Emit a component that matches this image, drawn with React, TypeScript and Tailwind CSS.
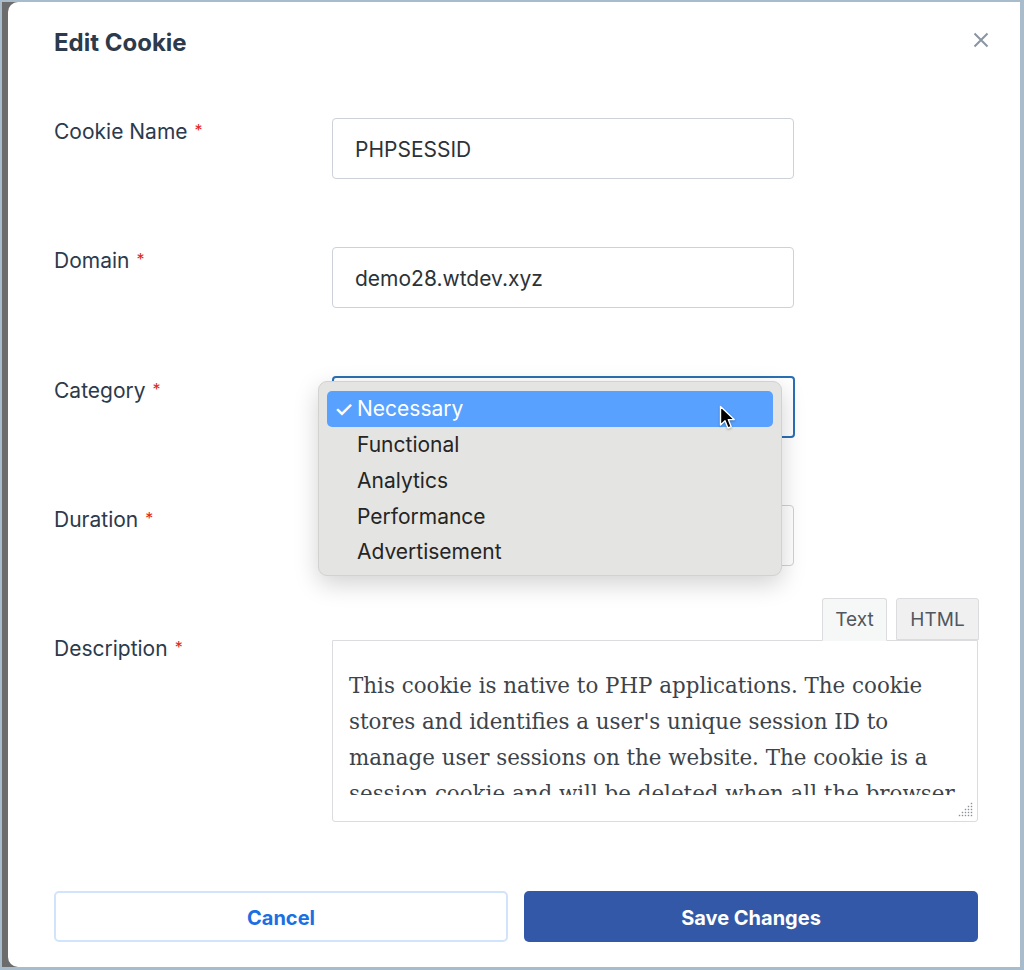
import React from "react";

const menuItems = ["Necessary", "Functional", "Analytics", "Performance", "Advertisement"];

function Label({ text, className = "" }: { text: string; className?: string }) {
  return (
    <div className={`flex items-start text-[21px] leading-[24px] text-[#2c3a4b] ${className}`}>
      <span>{text}</span>
      <span className="ml-[7px] text-[16px] leading-[20px] text-[#e0261b]">*</span>
    </div>
  );
}

function TextInput({ value }: { value: string }) {
  return (
    <input
      readOnly
      value={value}
      className="w-[462px] h-[61px] border border-[#ccd2d8] rounded-[4px] px-[22px] pt-[2px] text-[21px] text-[#2c3338] bg-white outline-none"
    />
  );
}

function Cursor() {
  return (
    <svg width="18" height="26" viewBox="0 0 18 26" className="drop-shadow-[0_1px_1px_rgba(0,0,0,0.3)]">
      <path
        d="M1.5 1.5 L1.5 20 L6 15.8 L9 23 L12.2 21.7 L9.3 14.6 L15.2 14.6 Z"
        fill="#000"
        stroke="#fff"
        strokeWidth="1.4"
        strokeLinejoin="round"
      />
    </svg>
  );
}

function ResizeGrip() {
  const dots: [number, number][] = [];
  for (let r = 0; r < 5; r++) {
    for (let c = 4 - r; c < 5; c++) dots.push([c * 3 + 1.5, r * 3 + 1.5]);
  }
  return (
    <svg width="15" height="15" viewBox="0 0 15 15">
      {dots.map(([x, y], i) => (
        <rect key={i} x={x - 0.7} y={y - 0.7} width="1.4" height="1.4" fill="#8c8f94" />
      ))}
    </svg>
  );
}

export default function App() {
  return (
    <div className="w-[1024px] h-[970px] bg-[#a8bccb] pt-[2px] pr-[4px] pb-[3px] pl-[2px] flex font-['Inter',sans-serif]">
      <div className="flex-1 flex bg-[#6c6c6c] pl-[6px]">
        <div className="flex-1 flex flex-col bg-white rounded-l-[10px] pl-[46px] pr-[42px]">
          {/* header */}
          <div className="h-[80px] flex items-center justify-between">
            <h1 className="pt-[2px] text-[24px] leading-[30px] font-bold text-[#2c3a4b]">Edit Cookie</h1>
            <button className="-mr-[11px] -mt-[4px] w-[16px] h-[16px]">
              <svg viewBox="0 0 16 16" width="16" height="16" fill="none" stroke="#8995a1" strokeWidth="2">
                <path d="M1.5 1.5 L14.5 14.5 M14.5 1.5 L1.5 14.5" />
              </svg>
            </button>
          </div>

          {/* cookie name */}
          <div className="mt-[36px] grid grid-cols-[278px_1fr]">
            <Label text="Cookie Name" className="pt-[2px]" />
            <TextInput value="PHPSESSID" />
          </div>

          {/* domain */}
          <div className="mt-[68px] grid grid-cols-[278px_1fr]">
            <Label text="Domain" className="pt-[2px]" />
            <TextInput value="demo28.wtdev.xyz" />
          </div>

          {/* category */}
          <div className="mt-[68px] grid grid-cols-[278px_1fr] relative z-10">
            <Label text="Category" className="pt-[3px]" />
            <div className="relative">
              <div className="w-[463px] h-[62px] border-2 border-[#2a6fb5] rounded-[4px] bg-white" />
              <div className="absolute left-[-14px] top-[5px] w-[464px] h-[195px] rounded-[9px] bg-[#e4e4e2] border border-[#d2d2d0] shadow-[0_8px_24px_rgba(0,0,0,0.18)] pt-[9px] px-[8px] text-[21px] text-[#252525]">
                {menuItems.map((item, i) => (
                  <div
                    key={item}
                    className={`flex items-center ${
                      i === 0 ? "h-[36px] rounded-[5px] bg-[#58a1fe] text-white" : "h-[35.75px]"
                    }`}
                  >
                    <span className="w-[30px] pl-[7px] text-[22px] font-medium">{i === 0 ? "✓" : ""}</span>
                    <span>{item}</span>
                  </div>
                ))}
              </div>
              <div className="absolute left-[387px] top-[29px]">
                <Cursor />
              </div>
            </div>
          </div>

          {/* duration */}
          <div className="mt-[67px] grid grid-cols-[278px_1fr]">
            <Label text="Duration" className="pt-[3px]" />
            <TextInput value="" />
          </div>

          {/* description */}
          <div className="mt-[32px] grid grid-cols-[278px_1fr]">
            <Label text="Description" className="pt-[39px]" />
            <div className="flex flex-col">
              <div className="flex justify-end gap-[9px]">
                <div className="w-[65px] h-[43px] -mb-px relative z-10 border border-[#dcdcde] border-b-[#f6f7f7] bg-[#f6f7f7] rounded-t-[3px] flex items-center justify-center pt-[2px] text-[19px] text-[#50575e]">
                  Text
                </div>
                <div className="w-[83px] h-[42px] -mr-px border border-[#dcdcde] bg-[#f0f0f1] rounded-t-[3px] flex items-center justify-center pt-[2px] text-[19px] text-[#50575e]">
                  HTML
                </div>
              </div>
              <div className="relative w-[646px] h-[182px] border border-[#dcdcde] bg-white rounded-b-[3px]">
                <div className="h-[154px] overflow-hidden pt-[27px] pl-[16px] font-['DejaVu_Serif',serif] text-[21.4px] leading-[36px] text-[#3c434a] whitespace-nowrap">
                  <div>This cookie is native to PHP applications. The cookie</div>
                  <div>stores and identifies a user's unique session ID to</div>
                  <div>manage user sessions on the website. The cookie is a</div>
                  <div>session cookie and will be deleted when all the browser</div>
                </div>
                <div className="absolute right-[4px] bottom-[4px]">
                  <ResizeGrip />
                </div>
              </div>
            </div>
          </div>

          {/* buttons */}
          <div className="mt-[69px] flex gap-[16px]">
            <button className="w-[454px] h-[51px] border-2 border-[#d2e4fb] rounded-[5px] bg-white pt-[2px] text-[20px] font-bold text-[#1b6fe2]">
              Cancel
            </button>
            <button className="w-[454px] h-[51px] rounded-[5px] bg-[#3358a7] pt-[2px] text-[20px] font-bold text-white">
              Save Changes
            </button>
          </div>
        </div>
      </div>
    </div>
  );
}
